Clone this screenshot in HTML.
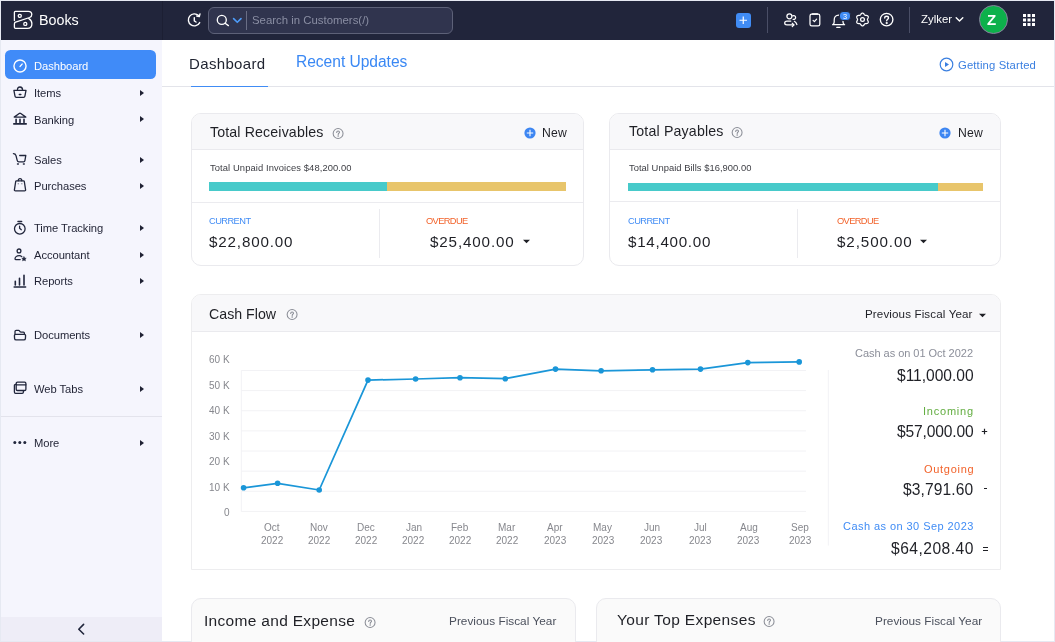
<!DOCTYPE html>
<html><head><meta charset="utf-8">
<style>
*{box-sizing:border-box;margin:0;padding:0}
html,body{width:1055px;height:642px;overflow:hidden;background:#e6e9f2;font-family:"Liberation Sans",sans-serif;color:#21263c}
.abs{position:absolute}
.t{position:absolute;white-space:nowrap;line-height:1;will-change:transform}
#hdr{position:absolute;left:1px;top:1px;width:1053px;height:39px;background:#21253b}
#side{position:absolute;left:1px;top:40px;width:161px;height:601px;background:#f5f5fd}
#main{position:absolute;left:162px;top:40px;width:892px;height:601px;background:#fff}
.card{position:absolute;border:1px solid #eaeaee;border-radius:10px;background:#fff;overflow:hidden}
.chd{position:absolute;left:0;top:0;right:0;background:#f8f8fa;border-bottom:1px solid #eaeaee}
.nav{position:absolute;left:0;width:161px;height:27px}
.nav .lbl{position:absolute;left:34px;top:8px;font-size:11.2px;color:#21263c;white-space:nowrap;line-height:1}
.nav .arr{position:absolute;left:139px;top:10px;width:0;height:0;border-top:4px solid transparent;border-bottom:4px solid transparent;border-left:4.5px solid #21263c}
.nav svg{position:absolute;left:12px;top:6px}
</style></head><body>
<div id="hdr"></div>
<div class="abs" style="left:162px;top:1px;width:1px;height:39px;background:#1c1f33"></div>
  <!-- logo -->
  <svg class="abs" style="left:10px;top:8px" width="26" height="24" viewBox="0 0 26 24" fill="none" stroke="#fff" stroke-width="1.3" stroke-linecap="round" stroke-linejoin="round">
    <path d="M4.4 12.5 V4.3 Q4.4 3.35 5.3 3.35 H18.4 C20.4 3.35 21.8 4.7 21.8 6.5 C21.8 7.9 21 8.9 19.6 9.5 L5.6 14.2 Q4.4 14.6 4.4 15.9 V19.3 Q4.4 20.4 5.5 20.4 H17.4 C20.1 20.4 21.9 18.4 21.9 15.7 C21.9 13.4 20.8 11.7 18.9 10.6"/>
    <circle cx="9.8" cy="7.85" r="1.55"/>
    <circle cx="15.3" cy="15.9" r="1.55"/>
  </svg>
  <div class="t" style="left:38.5px;top:12.5px;font-size:14.3px;color:#fff">Books</div>
  <!-- history -->
  <svg class="abs" style="left:186px;top:12px" width="16" height="16" viewBox="0 0 16 16" fill="none" stroke="#fff" stroke-width="1.4" stroke-linecap="round" stroke-linejoin="round">
    <path d="M13.7 10.6 A6 6 0 1 1 12.6 3.6"/>
    <path d="M14 1.9 L13.3 4.6 L10.7 4"/>
    <path d="M8.3 5.6 V8.9 L10 10"/>
  </svg>
  <!-- search box -->
  <div class="abs" style="left:208px;top:7px;width:244.5px;height:26.8px;border:1px solid #5d6178;border-radius:6px;background:#30344e"></div>
  <svg class="abs" style="left:215.7px;top:12.8px" width="14" height="14" viewBox="0 0 14 14" fill="none" stroke="#fff" stroke-width="1.35" stroke-linecap="round"><circle cx="5.8" cy="6.9" r="4.5"/><path d="M9.1 10.2 L12.4 12.6"/></svg>
  <svg class="abs" style="left:232px;top:16px" width="11" height="8" viewBox="0 0 11 8" fill="none" stroke="#4d9bf7" stroke-width="1.6" stroke-linecap="round" stroke-linejoin="round"><path d="M1.6 2.6 L5.3 6.3 L9 2.6"/></svg>
  <div class="abs" style="left:246px;top:11px;width:1px;height:19px;background:#6a6e85"></div>
  <div class="t" style="left:251.5px;top:14.5px;font-size:11.4px;color:#8a8ea3">Search in Customers(/)</div>
  <!-- plus -->
  <div class="abs" style="left:736.2px;top:12.8px;width:14.5px;height:14.8px;border-radius:3px;background:#408cf5"></div>
  <svg class="abs" style="left:736.2px;top:12.8px" width="14.5" height="14.5" viewBox="0 0 14.8 14.8" stroke="#fff" stroke-width="1.2"><path d="M7.4 3.6 V11.2 M3.6 7.4 H11.2"/></svg>
  <div class="abs" style="left:767px;top:7px;width:1px;height:25.5px;background:#4a4e66"></div>
  <!-- users -->
  <svg class="abs" style="left:782px;top:12px" width="17" height="16" viewBox="0 0 17 16" fill="none" stroke="#fff" stroke-width="1.25" stroke-linecap="round" stroke-linejoin="round">
    <circle cx="7.4" cy="4.3" r="2.5"/>
    <path d="M10.7 3.9 A1.9 1.9 0 1 1 11.1 7.3"/>
    <path d="M8.8 9.1 H5 C3.6 9.1 2.7 10 2.7 11 C2.7 12 3.6 12.9 5 12.9 H11.8"/>
    <path d="M10.3 11.3 L11.9 12.9 L10.3 14.5"/>
    <path d="M12.4 9.3 C13.7 10 14.5 11.2 14.9 12.5"/>
  </svg>
  <!-- clipboard -->
  <svg class="abs" style="left:808px;top:12px" width="14" height="16" viewBox="0 0 14 16" fill="none" stroke="#fff" stroke-width="1.25" stroke-linecap="round" stroke-linejoin="round">
    <rect x="2" y="2.2" width="9.8" height="11.7" rx="1.7"/>
    <path d="M4.5 2 H9.3" stroke-width="1.7"/>
    <path d="M5.1 8.4 L6.4 9.6 L8.6 7.2"/>
  </svg>
  <!-- bell -->
  <svg class="abs" style="left:830px;top:12px" width="17" height="17" viewBox="0 0 17 17" fill="none" stroke="#fff" stroke-width="1.25" stroke-linecap="round" stroke-linejoin="round">
    <path d="M2.6 12.7 C3.6 12.2 4.2 11.4 4.2 10 V7.9 C4.2 5.1 5.9 3.1 8.6 3.1 C11.3 3.1 13 5.1 13 7.9 V10 C13 11.4 13.6 12.2 14.6 12.7 Z"/>
    <path d="M6.8 15.4 H10"/>
  </svg>
  <div class="abs" style="left:838.9px;top:11px;width:12.4px;height:10px;border-radius:4px;background:#408cf5;border:1px solid #21253b"></div>
  <div class="t" style="left:842.6px;top:12.6px;font-size:7.4px;color:#fff">3</div>
  <!-- gear -->
  <svg class="abs" style="left:854.7px;top:12.4px" width="15" height="15" viewBox="0 0 15 15" fill="none" stroke="#fff" stroke-width="1.25" stroke-linejoin="round">
    <path d="M7.50 1.05 L7.84 1.10 L8.16 1.23 L8.46 1.43 L8.73 1.70 L8.98 1.99 L9.19 2.30 L9.38 2.59 L9.57 2.85 L9.76 3.06 L9.97 3.21 L10.22 3.32 L10.49 3.38 L10.81 3.41 L11.16 3.44 L11.53 3.47 L11.91 3.53 L12.27 3.64 L12.60 3.79 L12.88 4.01 L13.09 4.28 L13.21 4.59 L13.26 4.93 L13.23 5.30 L13.14 5.67 L13.01 6.02 L12.85 6.36 L12.69 6.68 L12.57 6.97 L12.48 7.24 L12.45 7.50 L12.48 7.76 L12.57 8.03 L12.69 8.32 L12.85 8.64 L13.01 8.98 L13.14 9.33 L13.23 9.70 L13.26 10.07 L13.21 10.41 L13.09 10.72 L12.88 10.99 L12.60 11.21 L12.27 11.36 L11.91 11.47 L11.53 11.53 L11.16 11.56 L10.81 11.59 L10.49 11.62 L10.22 11.68 L9.97 11.79 L9.76 11.94 L9.57 12.15 L9.38 12.41 L9.19 12.70 L8.98 13.01 L8.73 13.30 L8.46 13.57 L8.16 13.77 L7.84 13.90 L7.50 13.95 L7.16 13.90 L6.84 13.77 L6.54 13.57 L6.27 13.30 L6.02 13.01 L5.81 12.70 L5.62 12.41 L5.43 12.15 L5.24 11.94 L5.03 11.79 L4.78 11.68 L4.51 11.62 L4.19 11.59 L3.84 11.56 L3.47 11.53 L3.09 11.47 L2.73 11.36 L2.40 11.21 L2.12 10.99 L1.91 10.73 L1.79 10.41 L1.74 10.07 L1.77 9.70 L1.86 9.33 L1.99 8.98 L2.15 8.64 L2.31 8.32 L2.43 8.03 L2.52 7.76 L2.55 7.50 L2.52 7.24 L2.43 6.97 L2.31 6.68 L2.15 6.36 L1.99 6.02 L1.86 5.67 L1.77 5.30 L1.74 4.93 L1.79 4.59 L1.91 4.27 L2.12 4.01 L2.40 3.79 L2.73 3.64 L3.09 3.53 L3.47 3.47 L3.84 3.44 L4.19 3.41 L4.51 3.38 L4.78 3.32 L5.03 3.21 L5.24 3.06 L5.43 2.85 L5.62 2.59 L5.81 2.30 L6.02 1.99 L6.27 1.70 L6.54 1.43 L6.84 1.23 L7.16 1.10 Z"/>
    <circle cx="7.5" cy="7.5" r="1.9"/>
  </svg>
  <!-- help -->
  <svg class="abs" style="left:878.5px;top:12px" width="15" height="15" viewBox="0 0 15 15" fill="none" stroke="#fff" stroke-width="1.35" stroke-linecap="round">
    <circle cx="7.6" cy="7.6" r="6.3"/>
    <path d="M5.7 6 C5.7 4.9 6.5 4.2 7.6 4.2 C8.7 4.2 9.5 4.9 9.5 5.9 C9.5 7.2 7.7 7.3 7.7 8.8"/>
    <circle cx="7.7" cy="11" r="0.45" fill="#fff"/>
  </svg>
  <div class="abs" style="left:909px;top:7px;width:1px;height:26px;background:#4a4e66"></div>
  <div class="t" style="left:920.5px;top:13.5px;font-size:11.4px;color:#fff">Zylker</div>
  <svg class="abs" style="left:955px;top:16px" width="9" height="7" viewBox="0 0 9 7" fill="none" stroke="#fff" stroke-width="1.4" stroke-linecap="round" stroke-linejoin="round"><path d="M1.2 1.8 L4.5 5 L7.8 1.8"/></svg>
  <div class="abs" style="left:978.5px;top:5px;width:29px;height:29px;border-radius:50%;background:#0db14b;border:1px solid #8a7f9e"></div>
  <div class="t" style="left:987.2px;top:11.5px;font-size:15px;font-weight:bold;color:#fff">Z</div>
  <svg class="abs" style="left:1022px;top:13px" width="14" height="14" viewBox="0 0 14 14" fill="#fff">
    <rect x="1" y="1" width="3" height="3"/><rect x="5.5" y="1" width="3" height="3"/><rect x="10" y="1" width="3" height="3"/>
    <rect x="1" y="5.5" width="3" height="3"/><rect x="5.5" y="5.5" width="3" height="3"/><rect x="10" y="5.5" width="3" height="3"/>
    <rect x="1" y="10" width="3" height="3"/><rect x="5.5" y="10" width="3" height="3"/><rect x="10" y="10" width="3" height="3"/>
  </svg>
<div id="side"></div>
<div class="abs" style="left:5px;top:50px;width:151px;height:29.2px;border-radius:5.5px;background:#408bf8"></div>
<svg class="abs" style="left:12px;top:58px" width="16" height="16" viewBox="0 0 16 16" fill="none" stroke="#fff" stroke-width="1.4" stroke-linecap="round"><circle cx="8" cy="8" r="6.05"/><path d="M8.1 8.4 L10.1 6.1"/></svg>
<div class="t" style="left:33.9px;top:61.32px;font-size:11.2px;letter-spacing:-0.05px;color:#fff">Dashboard</div>
<svg class="abs" style="left:12px;top:84px" width="16" height="16" viewBox="0 0 16 16" fill="none" stroke="#21263c" stroke-width="1.3" stroke-linecap="round" stroke-linejoin="round"><path d="M1.9 6.3 H14 L12.9 12.2 C12.8 12.9 12.3 13.3 11.6 13.3 H4.3 C3.6 13.3 3.1 12.9 3 12.2 Z"/><path d="M5.4 6.2 C5.4 4 6.4 3 8 3 C9.6 3 10.6 4 10.6 6.2"/><path d="M7.3 10.4 H8.8" stroke-width="1.5"/></svg>
<div class="t" style="left:33.9px;top:87.92px;font-size:11.2px;letter-spacing:-0.05px;color:#1f2133">Items</div>
<div class="abs" style="left:139.5px;top:89.8px;width:0;height:0;border-top:3.3px solid transparent;border-bottom:3.3px solid transparent;border-left:4px solid #1f2133"></div>
<svg class="abs" style="left:12px;top:110px" width="16" height="16" viewBox="0 0 16 16" fill="none" stroke="#21263c" stroke-width="1.3" stroke-linecap="round" stroke-linejoin="round"><path d="M2.2 7.1 L7.2 3.5 Q8 3 8.8 3.5 L13.8 7.1 Z"/><path d="M4.1 9.2 V12.6 M8 9.2 V12.6 M12 9.2 V12.6" stroke-width="1.6"/><path d="M1.8 13.9 H14.2" stroke-width="1.6"/></svg>
<div class="t" style="left:33.9px;top:114.52px;font-size:11.2px;letter-spacing:-0.05px;color:#1f2133">Banking</div>
<div class="abs" style="left:139.5px;top:116.4px;width:0;height:0;border-top:3.3px solid transparent;border-bottom:3.3px solid transparent;border-left:4px solid #1f2133"></div>
<svg class="abs" style="left:12px;top:151px" width="16" height="16" viewBox="0 0 16 16" fill="none" stroke="#21263c" stroke-width="1.3" stroke-linecap="round" stroke-linejoin="round"><path d="M1.4 2.6 C3 2.6 3.6 3.2 4 4.6 L5.2 9.4 C5.4 10.3 6 10.8 6.9 10.8 H11.6 C12.3 10.8 12.8 10.4 12.9 9.7 L13.8 4.5 H7.7"/><path d="M5.6 13 H6.3 M11.5 13 H12.2" stroke-width="1.6"/></svg>
<div class="t" style="left:33.9px;top:154.62px;font-size:11.2px;letter-spacing:-0.05px;color:#1f2133">Sales</div>
<div class="abs" style="left:139.5px;top:156.5px;width:0;height:0;border-top:3.3px solid transparent;border-bottom:3.3px solid transparent;border-left:4px solid #1f2133"></div>
<svg class="abs" style="left:12px;top:177px" width="16" height="16" viewBox="0 0 16 16" fill="none" stroke="#21263c" stroke-width="1.3" stroke-linecap="round" stroke-linejoin="round"><path d="M6.2 3.8 C6.2 2.4 7 1.7 8 1.7 C9 1.7 9.8 2.4 9.8 3.8"/><path d="M4.5 3.8 H11.5 C11.9 3.8 12.2 4.1 12.3 4.5 L13.6 12.8 C13.7 13.5 13.2 13.9 12.6 13.9 H3.4 C2.8 13.9 2.3 13.5 2.4 12.8 L3.7 4.5 C3.8 4.1 4.1 3.8 4.5 3.8 Z"/><circle cx="6.2" cy="6.8" r="0.5" fill="#21263c" stroke="none"/><circle cx="9.9" cy="6.8" r="0.5" fill="#21263c" stroke="none"/></svg>
<div class="t" style="left:33.9px;top:181.02px;font-size:11.2px;letter-spacing:-0.05px;color:#1f2133">Purchases</div>
<div class="abs" style="left:139.5px;top:182.9px;width:0;height:0;border-top:3.3px solid transparent;border-bottom:3.3px solid transparent;border-left:4px solid #1f2133"></div>
<svg class="abs" style="left:12px;top:219px" width="16" height="16" viewBox="0 0 16 16" fill="none" stroke="#21263c" stroke-width="1.3" stroke-linecap="round" stroke-linejoin="round"><circle cx="7.8" cy="9.8" r="5.3"/><path d="M6 2.4 H9.6" stroke-width="1.5"/><path d="M7.6 7.2 V9.3 L9.3 10.7"/></svg>
<div class="t" style="left:33.9px;top:223.22px;font-size:11.2px;letter-spacing:-0.05px;color:#1f2133">Time Tracking</div>
<div class="abs" style="left:139.5px;top:225.1px;width:0;height:0;border-top:3.3px solid transparent;border-bottom:3.3px solid transparent;border-left:4px solid #1f2133"></div>
<svg class="abs" style="left:12px;top:247px" width="16" height="16" viewBox="0 0 16 16" fill="none" stroke="#21263c" stroke-width="1.3" stroke-linecap="round" stroke-linejoin="round"><circle cx="7" cy="3.9" r="1.9"/><path d="M9.8 9.6 C9.2 9 8.3 8.6 7.2 8.6 C4.6 8.6 3 10.2 3 12.1 C3 12.5 3.3 12.6 3.7 12.6 H8.2"/><path d="M12 9.8 L12.7 11.2 L14.2 11.3 L13.1 12.3 L13.4 13.8 L12 13 L10.6 13.8 L10.9 12.3 L9.8 11.3 L11.3 11.2 Z" fill="#21263c" stroke-width="0.6"/></svg>
<div class="t" style="left:33.9px;top:250.22px;font-size:11.2px;letter-spacing:-0.05px;color:#1f2133">Accountant</div>
<div class="abs" style="left:139.5px;top:252.1px;width:0;height:0;border-top:3.3px solid transparent;border-bottom:3.3px solid transparent;border-left:4px solid #1f2133"></div>
<svg class="abs" style="left:12px;top:273px" width="16" height="16" viewBox="0 0 16 16" fill="none" stroke="#21263c" stroke-width="1.3" stroke-linecap="round" stroke-linejoin="round"><path d="M3.3 8.2 V12 M7.5 5.2 V12 M12 2.2 V12" stroke-width="1.6"/><path d="M2.2 14 H13.6" stroke-width="1.6"/></svg>
<div class="t" style="left:33.9px;top:276.42px;font-size:11.2px;letter-spacing:-0.05px;color:#1f2133">Reports</div>
<div class="abs" style="left:139.5px;top:278.3px;width:0;height:0;border-top:3.3px solid transparent;border-bottom:3.3px solid transparent;border-left:4px solid #1f2133"></div>
<svg class="abs" style="left:12px;top:327px" width="16" height="16" viewBox="0 0 16 16" fill="none" stroke="#21263c" stroke-width="1.3" stroke-linecap="round" stroke-linejoin="round"><path d="M3 6.9 V4.6 C3 3.9 3.5 3.4 4.2 3.4 H6.6 C7 3.4 7.3 3.6 7.5 3.9 L8.2 4.8 C8.4 5 8.6 5.1 8.9 5.1 H11.4 C12 5.1 12.4 5.6 12.4 6.2 V7.1"/><path d="M2.4 8.4 C2.4 7.7 2.9 7.3 3.6 7.3 H12.4 C13.1 7.3 13.6 7.7 13.6 8.4 L13.4 11.6 C13.3 12.4 12.7 12.9 11.9 12.9 H4.1 C3.3 12.9 2.7 12.4 2.6 11.6 Z"/></svg>
<div class="t" style="left:33.9px;top:330.22px;font-size:11.2px;letter-spacing:-0.05px;color:#1f2133">Documents</div>
<div class="abs" style="left:139.5px;top:332.1px;width:0;height:0;border-top:3.3px solid transparent;border-bottom:3.3px solid transparent;border-left:4px solid #1f2133"></div>
<svg class="abs" style="left:12px;top:380px" width="16" height="16" viewBox="0 0 16 16" fill="none" stroke="#21263c" stroke-width="1.3" stroke-linecap="round" stroke-linejoin="round"><rect x="4.2" y="2.1" width="9.7" height="8.4" rx="1.3"/><path d="M4.2 4.8 H13.9"/><path d="M4.2 4.3 H3.6 C2.9 4.3 2.4 4.8 2.4 5.5 V12.1 C2.4 12.8 2.9 13.3 3.6 13.3 H10.2 C10.9 13.3 11.4 12.8 11.4 12.1 V10.6"/></svg>
<div class="t" style="left:33.9px;top:383.72px;font-size:11.2px;letter-spacing:-0.05px;color:#1f2133">Web Tabs</div>
<div class="abs" style="left:139.5px;top:385.6px;width:0;height:0;border-top:3.3px solid transparent;border-bottom:3.3px solid transparent;border-left:4px solid #1f2133"></div>
<svg class="abs" style="left:12px;top:436px" width="16" height="12" viewBox="0 0 16 12" fill="#21263c"><circle cx="2.8" cy="6.4" r="1.5"/><circle cx="7.8" cy="6.4" r="1.5"/><circle cx="12.8" cy="6.4" r="1.5"/></svg>
<div class="t" style="left:33.9px;top:437.62px;font-size:11.2px;letter-spacing:-0.05px;color:#1f2133">More</div>
<div class="abs" style="left:139.5px;top:439.5px;width:0;height:0;border-top:3.3px solid transparent;border-bottom:3.3px solid transparent;border-left:4px solid #1f2133"></div>
<div class="abs" style="left:1px;top:416px;width:161px;height:1px;background:#e3e3ec"></div>
<div class="abs" style="left:1px;top:616.5px;width:161px;height:24.5px;background:#eeedf7"></div>
<svg class="abs" style="left:75px;top:622px" width="12" height="14" viewBox="0 0 12 14" fill="none" stroke="#21263c" stroke-width="1.6" stroke-linecap="round" stroke-linejoin="round"><path d="M8.6 2.4 L3.8 7.2 L8.6 12"/></svg><div id="main"></div>
<!-- tab line -->
<div class="abs" style="left:162px;top:86px;width:892px;height:1px;background:#e3e4ea"></div>
<div class="abs" style="left:190.8px;top:85.6px;width:77px;height:1.6px;background:#408cf5"></div>
<!-- getting started icon -->
<svg class="abs" style="left:939px;top:57.2px" width="15" height="15" viewBox="0 0 15 15" fill="none" stroke="#3a7fe0" stroke-width="1.2"><circle cx="7.5" cy="7.5" r="6.3"/><path d="M6 4.9 L10 7.5 L6 10.1 Z" fill="#3a7fe0" stroke="none"/></svg>

<!-- receivables card -->
<div class="card" style="left:191px;top:113px;width:393px;height:153px">
  <div class="chd" style="height:36px"></div>
  <div class="abs" style="left:0;top:88px;width:393px;height:1px;background:#ebebef"></div>
  <div class="abs" style="left:187px;top:95px;width:1px;height:49px;background:#ebebef"></div>
</div>
<div class="abs" style="left:209.3px;top:182.3px;width:178px;height:8.8px;background:#47caca"></div>
<div class="abs" style="left:387.3px;top:182.3px;width:178.8px;height:8.8px;background:#e8c56b"></div>

<!-- payables card -->
<div class="card" style="left:609px;top:113px;width:392px;height:153px">
  <div class="chd" style="height:36px"></div>
  <div class="abs" style="left:0;top:87px;width:392px;height:1px;background:#ebebef"></div>
  <div class="abs" style="left:187px;top:95px;width:1px;height:49px;background:#ebebef"></div>
</div>
<div class="abs" style="left:628.3px;top:182.5px;width:309.7px;height:8.6px;background:#47caca"></div>
<div class="abs" style="left:938px;top:182.5px;width:44.7px;height:8.6px;background:#e8c56b"></div>

<!-- cash flow card -->
<div class="card" style="left:191px;top:294px;width:810px;height:276px;border-radius:10px 10px 0 0;border-color:#ededef">
  <div class="chd" style="height:36.5px"></div>
</div>

<!-- bottom cards -->
<div class="card" style="left:191px;top:598px;width:385px;height:80px;background:#fafafa"></div>
<div class="card" style="left:596px;top:598px;width:405px;height:80px;background:#fafafa"></div>
<svg class="abs" style="left:0;top:0" width="1055" height="642" viewBox="0 0 1055 642">
<path d="M241.3 370.45 H806" stroke="#f2f2f5" stroke-width="1"/>
<path d="M241.3 390.59 H806" stroke="#f2f2f5" stroke-width="1"/>
<path d="M241.3 410.73 H806" stroke="#f2f2f5" stroke-width="1"/>
<path d="M241.3 430.87 H806" stroke="#f2f2f5" stroke-width="1"/>
<path d="M241.3 451.01 H806" stroke="#f2f2f5" stroke-width="1"/>
<path d="M241.3 471.15 H806" stroke="#f2f2f5" stroke-width="1"/>
<path d="M241.3 491.29 H806" stroke="#f2f2f5" stroke-width="1"/>
<path d="M241.3 511.43 H806" stroke="#f2f2f5" stroke-width="1"/>
<path d="M241.3 370.5 V511.5" stroke="#f2f2f5" stroke-width="1"/>
<path d="M828.3 370 V545.6" stroke="#f2f2f5" stroke-width="1"/>
<polyline fill="none" stroke="#1a96d8" stroke-width="1.75" stroke-linejoin="round" points="243.6,487.8 277.6,483.3 319.2,490.0 368.0,380.1 415.6,379.0 460.0,377.7 505.3,378.7 555.5,369.1 601.1,370.8 652.5,369.8 700.5,369.1 747.8,362.6 799.2,361.9"/>
<circle cx="243.6" cy="487.8" r="2.8" fill="#1a96d8"/>
<circle cx="277.6" cy="483.3" r="2.8" fill="#1a96d8"/>
<circle cx="319.2" cy="490.0" r="2.8" fill="#1a96d8"/>
<circle cx="368.0" cy="380.1" r="2.8" fill="#1a96d8"/>
<circle cx="415.6" cy="379.0" r="2.8" fill="#1a96d8"/>
<circle cx="460.0" cy="377.7" r="2.8" fill="#1a96d8"/>
<circle cx="505.3" cy="378.7" r="2.8" fill="#1a96d8"/>
<circle cx="555.5" cy="369.1" r="2.8" fill="#1a96d8"/>
<circle cx="601.1" cy="370.8" r="2.8" fill="#1a96d8"/>
<circle cx="652.5" cy="369.8" r="2.8" fill="#1a96d8"/>
<circle cx="700.5" cy="369.1" r="2.8" fill="#1a96d8"/>
<circle cx="747.8" cy="362.6" r="2.8" fill="#1a96d8"/>
<circle cx="799.2" cy="361.9" r="2.8" fill="#1a96d8"/>
</svg><!-- help icons -->
<svg class="abs" style="left:332px;top:127px" width="13" height="13" viewBox="0 0 13 13" fill="none" stroke="#8a8d96" stroke-width="1.05" stroke-linecap="round"><circle cx="6.1" cy="6.5" r="4.95"/><path d="M4.7 5.4 C4.7 4.5 5.3 4 6.1 4 C6.9 4 7.5 4.5 7.5 5.2 C7.5 6.1 6.2 6.3 6.2 7.4"/><circle cx="6.2" cy="8.95" r="0.3" fill="#8a8d96"/></svg>
<svg class="abs" style="left:730.5px;top:126px" width="13" height="13" viewBox="0 0 13 13" fill="none" stroke="#8a8d96" stroke-width="1.05" stroke-linecap="round"><circle cx="6.1" cy="6.5" r="4.95"/><path d="M4.7 5.4 C4.7 4.5 5.3 4 6.1 4 C6.9 4 7.5 4.5 7.5 5.2 C7.5 6.1 6.2 6.3 6.2 7.4"/><circle cx="6.2" cy="8.95" r="0.3" fill="#8a8d96"/></svg>
<svg class="abs" style="left:286px;top:307.5px" width="13" height="13" viewBox="0 0 13 13" fill="none" stroke="#8a8d96" stroke-width="1.05" stroke-linecap="round"><circle cx="6.1" cy="6.5" r="4.95"/><path d="M4.7 5.4 C4.7 4.5 5.3 4 6.1 4 C6.9 4 7.5 4.5 7.5 5.2 C7.5 6.1 6.2 6.3 6.2 7.4"/><circle cx="6.2" cy="8.95" r="0.3" fill="#8a8d96"/></svg>
<svg class="abs" style="left:364px;top:616px" width="13" height="13" viewBox="0 0 13 13" fill="none" stroke="#8a8d96" stroke-width="1.05" stroke-linecap="round"><circle cx="6.1" cy="6.5" r="4.95"/><path d="M4.7 5.4 C4.7 4.5 5.3 4 6.1 4 C6.9 4 7.5 4.5 7.5 5.2 C7.5 6.1 6.2 6.3 6.2 7.4"/><circle cx="6.2" cy="8.95" r="0.3" fill="#8a8d96"/></svg>
<svg class="abs" style="left:762.5px;top:614.5px" width="13" height="13" viewBox="0 0 13 13" fill="none" stroke="#8a8d96" stroke-width="1.05" stroke-linecap="round"><circle cx="6.1" cy="6.5" r="4.95"/><path d="M4.7 5.4 C4.7 4.5 5.3 4 6.1 4 C6.9 4 7.5 4.5 7.5 5.2 C7.5 6.1 6.2 6.3 6.2 7.4"/><circle cx="6.2" cy="8.95" r="0.3" fill="#8a8d96"/></svg>
<!-- plus circles -->
<svg class="abs" style="left:523.5px;top:127px" width="12" height="12" viewBox="0 0 12 12"><circle cx="6" cy="6" r="5.6" fill="#3d86f2"/><path d="M6 2.8 V9.2 M2.8 6 H9.2" stroke="#fff" stroke-width="1.1"/></svg>
<svg class="abs" style="left:939.2px;top:127px" width="12" height="12" viewBox="0 0 12 12"><circle cx="6" cy="6" r="5.6" fill="#3d86f2"/><path d="M6 2.8 V9.2 M2.8 6 H9.2" stroke="#fff" stroke-width="1.1"/></svg>
<!-- carets -->
<svg class="abs" style="left:522px;top:239px" width="9" height="5" viewBox="0 0 9 5"><path d="M1 0.8 H8 L4.5 4.3 Z" fill="#1f2026"/></svg>
<svg class="abs" style="left:919px;top:239px" width="9" height="5" viewBox="0 0 9 5"><path d="M1 0.8 H8 L4.5 4.3 Z" fill="#1f2026"/></svg>
<svg class="abs" style="left:978px;top:312.5px" width="9" height="5" viewBox="0 0 9 5"><path d="M1 0.8 H8 L4.5 4.3 Z" fill="#1f2026"/></svg>
<!-- cash flow operators -->
<svg class="abs" style="left:980px;top:427px" width="9" height="9" viewBox="0 0 9 9" stroke="#1f2026" stroke-width="1.2"><path d="M4.5 1.8 V7.2 M1.8 4.5 H7.2"/></svg>
<div class="abs" style="left:983.8px;top:488.2px;width:3px;height:1.2px;background:#1f2026"></div>
<div class="abs" style="left:982.5px;top:546.6px;width:5.2px;height:1.1px;background:#1f2026"></div>
<div class="abs" style="left:982.5px;top:549.6px;width:5.2px;height:1.1px;background:#1f2026"></div>
<div class="t" style="left:188.77px;top:56.00px;font-size:15px;color:#1f2330;letter-spacing:0.351px">Dashboard</div>
<div class="t" style="left:295.52px;top:53.89px;font-size:15.6px;color:#3a88f4;letter-spacing:-0.037px">Recent Updates</div>
<div class="t" style="left:958.03px;top:60.23px;font-size:11.3px;color:#3a7fe0;letter-spacing:0.137px">Getting Started</div>
<div class="t" style="left:209.58px;top:125.28px;font-size:14.2px;color:#1f2026;letter-spacing:0.133px">Total Receivables</div>
<div class="t" style="left:542.30px;top:126.57px;font-size:12.2px;color:#1f2026;letter-spacing:0.190px">New</div>
<div class="t" style="left:209.79px;top:163.04px;font-size:9.4px;color:#3d3e44;letter-spacing:0.095px">Total Unpaid Invoices $48,200.00</div>
<div class="t" style="left:208.83px;top:217.43px;font-size:9.3px;color:#408cf5;letter-spacing:-0.561px">CURRENT</div>
<div class="t" style="left:209.14px;top:234.43px;font-size:15.2px;color:#1f2026;letter-spacing:0.838px">$22,800.00</div>
<div class="t" style="left:426.46px;top:217.43px;font-size:9.3px;color:#f2622a;letter-spacing:-0.624px">OVERDUE</div>
<div class="t" style="left:429.74px;top:234.43px;font-size:15.2px;color:#1f2026;letter-spacing:0.860px">$25,400.00</div>
<div class="t" style="left:628.58px;top:124.28px;font-size:14.2px;color:#1f2026;letter-spacing:0.165px">Total Payables</div>
<div class="t" style="left:957.80px;top:126.57px;font-size:12.2px;color:#1f2026;letter-spacing:0.240px">New</div>
<div class="t" style="left:628.79px;top:163.04px;font-size:9.4px;color:#3d3e44;letter-spacing:0.034px">Total Unpaid Bills $16,900.00</div>
<div class="t" style="left:627.93px;top:217.43px;font-size:9.3px;color:#408cf5;letter-spacing:-0.561px">CURRENT</div>
<div class="t" style="left:628.24px;top:234.43px;font-size:15.2px;color:#1f2026;letter-spacing:0.705px">$14,400.00</div>
<div class="t" style="left:836.56px;top:217.43px;font-size:9.3px;color:#f2622a;letter-spacing:-0.624px">OVERDUE</div>
<div class="t" style="left:836.84px;top:234.43px;font-size:15.2px;color:#1f2026;letter-spacing:0.897px">$2,500.00</div>
<div class="t" style="left:209.18px;top:306.88px;font-size:14.2px;color:#1f2026">Cash Flow</div>
<div class="t" style="left:865.35px;top:307.88px;font-size:11.6px;color:#1f2026;letter-spacing:0.126px">Previous Fiscal Year</div>
<div class="t" style="left:855.14px;top:347.79px;font-size:11px;color:#8b8e99;letter-spacing:-0.030px">Cash as on 01 Oct 2022</div>
<div class="t" style="left:896.63px;top:368.09px;font-size:15.6px;color:#1f2026;letter-spacing:-0.035px">$11,000.00</div>
<div class="t" style="left:923.18px;top:405.89px;font-size:11px;color:#62ad40;letter-spacing:0.783px">Incoming</div>
<div class="t" style="left:896.63px;top:423.89px;font-size:15.6px;color:#1f2026;letter-spacing:-0.163px">$57,000.00</div>
<div class="t" style="left:923.68px;top:463.59px;font-size:11px;color:#f2622a;letter-spacing:0.711px">Outgoing</div>
<div class="t" style="left:903.13px;top:482.09px;font-size:15.6px;color:#1f2026;letter-spacing:0.088px">$3,791.60</div>
<div class="t" style="left:843.14px;top:521.09px;font-size:11px;color:#408cf5;letter-spacing:0.440px">Cash as on 30 Sep 2023</div>
<div class="t" style="left:891.23px;top:540.59px;font-size:15.6px;color:#1f2026;letter-spacing:0.481px">$64,208.40</div>
<div class="t" style="left:203.87px;top:613.08px;font-size:15.5px;color:#1f2026;letter-spacing:0.311px">Income and Expense</div>
<div class="t" style="left:448.83px;top:616.01px;font-size:11.8px;color:#4b505c;letter-spacing:0.025px">Previous Fiscal Year</div>
<div class="t" style="left:616.76px;top:612.18px;font-size:15.5px;color:#1f2026;letter-spacing:0.355px">Your Top Expenses</div>
<div class="t" style="left:875.33px;top:616.01px;font-size:11.8px;color:#4b505c;letter-spacing:0.014px">Previous Fiscal Year</div>
<div class="t" style="left:208.73px;top:355.43px;font-size:10px;color:#86878d">60 K</div>
<div class="t" style="left:208.73px;top:380.93px;font-size:10px;color:#86878d">50 K</div>
<div class="t" style="left:208.73px;top:406.43px;font-size:10px;color:#86878d">40 K</div>
<div class="t" style="left:208.73px;top:431.93px;font-size:10px;color:#86878d">30 K</div>
<div class="t" style="left:208.73px;top:457.43px;font-size:10px;color:#86878d">20 K</div>
<div class="t" style="left:208.73px;top:482.93px;font-size:10px;color:#86878d">10 K</div>
<div class="t" style="left:224.03px;top:508.43px;font-size:10px;color:#86878d">0</div>
<div class="t" style="left:264.32px;top:522.53px;font-size:10px;color:#86878d">Oct</div>
<div class="t" style="left:261.18px;top:535.53px;font-size:10px;color:#86878d">2022</div>
<div class="t" style="left:309.91px;top:522.53px;font-size:10px;color:#86878d">Nov</div>
<div class="t" style="left:308.07px;top:535.53px;font-size:10px;color:#86878d">2022</div>
<div class="t" style="left:357.32px;top:522.53px;font-size:10px;color:#86878d">Dec</div>
<div class="t" style="left:355.38px;top:535.53px;font-size:10px;color:#86878d">2022</div>
<div class="t" style="left:405.58px;top:522.53px;font-size:10px;color:#86878d">Jan</div>
<div class="t" style="left:402.27px;top:535.53px;font-size:10px;color:#86878d">2022</div>
<div class="t" style="left:451.18px;top:522.53px;font-size:10px;color:#86878d">Feb</div>
<div class="t" style="left:448.88px;top:535.53px;font-size:10px;color:#86878d">2022</div>
<div class="t" style="left:498.06px;top:522.53px;font-size:10px;color:#86878d">Mar</div>
<div class="t" style="left:495.88px;top:535.53px;font-size:10px;color:#86878d">2022</div>
<div class="t" style="left:547.09px;top:522.53px;font-size:10px;color:#86878d">Apr</div>
<div class="t" style="left:543.64px;top:535.53px;font-size:10px;color:#86878d">2023</div>
<div class="t" style="left:592.95px;top:522.53px;font-size:10px;color:#86878d">May</div>
<div class="t" style="left:591.64px;top:535.53px;font-size:10px;color:#86878d">2023</div>
<div class="t" style="left:643.68px;top:522.53px;font-size:10px;color:#86878d">Jun</div>
<div class="t" style="left:640.34px;top:535.53px;font-size:10px;color:#86878d">2023</div>
<div class="t" style="left:694.36px;top:522.53px;font-size:10px;color:#86878d">Jul</div>
<div class="t" style="left:689.34px;top:535.53px;font-size:10px;color:#86878d">2023</div>
<div class="t" style="left:739.91px;top:522.53px;font-size:10px;color:#86878d">Aug</div>
<div class="t" style="left:737.34px;top:535.53px;font-size:10px;color:#86878d">2023</div>
<div class="t" style="left:790.98px;top:522.53px;font-size:10px;color:#86878d">Sep</div>
<div class="t" style="left:788.74px;top:535.53px;font-size:10px;color:#86878d">2023</div></body></html>
